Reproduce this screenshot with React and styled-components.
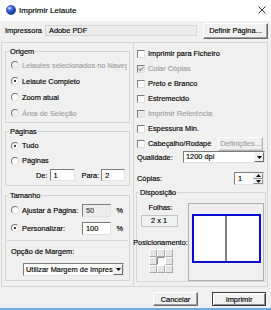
import React from 'react'
import styled, { createGlobalStyle, css } from 'styled-components'

const GlobalStyle = createGlobalStyle`
  html, body {
    margin: 0;
    padding: 0;
    background: #f0f0f0;
  }
  body {
    font-family: "Liberation Sans", Arial, sans-serif;
    font-size: 7.4px;
    color: #000;
    -webkit-text-stroke: 0.15px;
  }
`

const Window = styled.div`
  width: 271px;
  height: 310px;
  box-sizing: border-box;
  background: #f0f0f0;
  border-bottom: 2px solid #73a9dd;
  display: flex;
  flex-direction: column;
  overflow: hidden;
`

const TitleBar = styled.div`
  height: 21px;
  flex-shrink: 0;
  background: #fff;
  display: flex;
  align-items: center;
  padding: 0 5px 1px 6px;
  box-sizing: border-box;
`

const TitleText = styled.span`
  flex: 1;
  margin-left: 3px;
  font-size: 8px;
`

const PrinterRow = styled.div`
  height: 21px;
  flex-shrink: 0;
  display: flex;
  align-items: center;
  padding: 0 0 2px 5px;
  box-sizing: border-box;
`

const ReadField = styled.div`
  box-sizing: border-box;
  width: 152px;
  height: 11px;
  margin-left: 3px;
  padding-left: 3px;
  line-height: 9px;
  background: #ececec;
  border: 1px solid #d6d6d6;
`

const Button = styled.button`
  box-sizing: border-box;
  width: ${p => p.$w}px;
  height: ${p => p.$h || 14}px;
  margin: 0;
  padding: 0;
  font: inherit;
  color: ${p => (p.disabled ? '#a2a2a2' : '#000')};
  background: #f0f0f0;
  border: 1px solid;
  border-color: ${p => (p.disabled ? '#fff #b4b4b4 #b4b4b4 #fff' : '#fff #6a6a6a #6a6a6a #fff')};
  box-shadow: inset -1px -1px ${p => (p.disabled ? '#d8d8d8' : '#a0a0a0')};
  ${p => p.$default && css`
    border-color: #3c3c3c;
    box-shadow: inset 1px 1px #fff, inset -1px -1px #8c8c8c;
  `}
`

const Main = styled.div`
  height: 245px;
  flex-shrink: 0;
  box-sizing: border-box;
  margin: 0 3px 0 1px;
  border: 1px solid #d5d5d5;
  display: flex;
`

const LeftCol = styled.div`
  width: 132px;
  box-sizing: border-box;
  border-right: 1px solid #d5d5d5;
  padding: 4px 3px 0;
  display: flex;
  flex-direction: column;
`

const RightCol = styled.div`
  flex: 1;
  padding: 3px 0 0 3px;
  display: flex;
  flex-direction: column;
`

const Group = styled.fieldset`
  margin: ${p => p.$mt || 0}px 0 0;
  padding: ${p => p.$pad || '1px 5px 1px'};
  border: 1px solid #d5d5d5;
  min-width: 0;
`

const Legend = styled.legend`
  padding: 0 1px;
  margin-left: ${p => p.$offset ?? -2}px;
  line-height: 9px;
`

const OptionRow = styled.div`
  display: flex;
  align-items: center;
  height: ${p => p.$h || 16}px;
  white-space: nowrap;
  overflow: hidden;
  margin-right: -3px;
  color: ${p => (p.$disabled ? '#a2a2a2' : '#000')};
`

const RadioMark = styled.span`
  width: 8px;
  height: 8px;
  flex-shrink: 0;
  box-sizing: border-box;
  border-radius: 50%;
  border: 1px solid;
  border-color: #7c7c7c #e0e0e0 #e0e0e0 #7c7c7c;
  background: ${p => (p.$disabled ? '#f0f0f0' : '#fff')};
  margin-right: 3px;
  display: flex;
  align-items: center;
  justify-content: center;

  &::after {
    content: '';
    display: ${p => (p.$checked ? 'block' : 'none')};
    width: 2px;
    height: 2px;
    border-radius: 50%;
    background: #000;
  }
`

const CheckBox = styled.span`
  width: 8px;
  height: 8px;
  flex-shrink: 0;
  box-sizing: border-box;
  border: 1px solid;
  border-color: #7c7c7c #e0e0e0 #e0e0e0 #7c7c7c;
  background: ${p => (p.$disabled ? '#e8e8e8' : '#fff')};
  margin-right: 3px;
  display: flex;
  align-items: center;
  justify-content: center;
`

const TextBox = styled.input`
  box-sizing: border-box;
  width: ${p => p.$w}px;
  height: ${p => p.$h || 12}px;
  margin: 0 0 0 ${p => p.$ml || 0}px;
  padding: 0 0 0 3px;
  font: inherit;
  color: ${p => (p.$off ? '#3a3a3a' : '#000')};
  background: ${p => (p.$off ? '#ececec' : '#fff')};
  border: 1px solid;
  border-color: #7c7c7c #e3e3e3 #e3e3e3 #7c7c7c;
  outline: none;
`

const PageRange = styled.div`
  display: flex;
  align-items: center;
  height: 14px;
  padding-left: 25px;
`

const FieldLabel = styled.span`
  margin-left: ${p => p.$ml || 0}px;
  margin-right: ${p => p.$mr || 2}px;
`

const SizeRow = styled.div`
  display: flex;
  align-items: center;
  height: 18px;
  white-space: nowrap;
`

const Grow = styled.span`
  flex: 1;
`

const Percent = styled.span`
  width: 12px;
  text-align: right;
  margin-right: 1px;
`

const Separator = styled.div`
  height: 1px;
  background: #d5d5d5;
  margin: 3px -4px 0;
`

const MarginLabel = styled.div`
  height: 14px;
  line-height: 14px;
  margin-top: 4px;
`

const Select = styled.div`
  box-sizing: border-box;
  width: ${p => p.$w}px;
  height: ${p => p.$h || 12}px;
  margin-left: ${p => (p.$ml === 'auto' ? 'auto' : `${p.$ml || 0}px`)};
  margin-right: ${p => p.$mr || 0}px;
  margin-top: ${p => p.$mt || 0}px;
  border: 1px solid;
  border-color: #7c7c7c #e3e3e3 #e3e3e3 #7c7c7c;
  background: #fff;
  display: flex;
`

const SelectText = styled.span`
  flex: 1;
  overflow: hidden;
  white-space: nowrap;
  padding-left: 2px;
  line-height: ${p => p.$lh || 10}px;
`

const ArrowButton = styled.span`
  width: 10px;
  flex-shrink: 0;
  box-sizing: border-box;
  background: #f0f0f0;
  border: 1px solid;
  border-color: #f8f8f8 #6a6a6a #6a6a6a #f8f8f8;
  display: flex;
  align-items: center;
  justify-content: center;
`

const CheckRow = styled(OptionRow)`
  height: 15px;
  margin-right: 0;
  overflow: visible;
`

const PushRight = styled.div`
  margin-left: auto;
  margin-right: 4px;
`

const LabeledRow = styled.div`
  display: flex;
  align-items: center;
  height: ${p => p.$h}px;
  margin-top: ${p => p.$mt || 0}px;
`

const Spinner = styled.div`
  box-sizing: border-box;
  width: 30px;
  height: 13px;
  margin: 0 3px 0 auto;
  border: 1px solid;
  border-color: #7c7c7c #e3e3e3 #e3e3e3 #7c7c7c;
  background: #fff;
  display: flex;
`

const SpinValue = styled.span`
  flex: 1;
  padding-left: 3px;
  line-height: 11px;
`

const SpinButtons = styled.span`
  width: 10px;
  display: flex;
  flex-direction: column;
`

const SpinButton = styled.span`
  flex: 1;
  box-sizing: border-box;
  background: #f0f0f0;
  border: 1px solid;
  border-color: #f8f8f8 #8a8a8a #8a8a8a #f8f8f8;
  display: flex;
  align-items: center;
  justify-content: center;
`

const LayoutGroup = styled(Group)`
  width: 130px;
  box-sizing: border-box;
  margin-left: -1px;
`

const LayoutBody = styled.div`
  display: flex;
  height: 78px;
`

const SheetInfo = styled.div`
  width: 47px;
  display: flex;
  flex-direction: column;
  align-items: center;
  white-space: nowrap;
`

const InfoLabel = styled.div`
  line-height: 9px;
  margin-top: ${p => p.$mt || 0}px;
`

const SheetCount = styled.div`
  box-sizing: border-box;
  width: 37px;
  height: 12px;
  margin-top: 3px;
  margin-left: -3px;
  border: 1px solid #c4c4c4;
  text-align: center;
  line-height: 10px;
`

const AnchorGrid = styled.div`
  display: grid;
  grid-template-columns: repeat(3, 8px);
  grid-template-rows: repeat(3, 8px);
  margin-top: 2px;
`

const AnchorCell = styled.span`
  box-sizing: border-box;
  border: 1px solid;
  border-color: ${p => (p.$active ? '#8c8c8c #fff #fff #8c8c8c' : '#fff #a8a8a8 #a8a8a8 #fff')};
  background: ${p => (p.$active ? '#fafafa' : '#e4e4e4')};
`

const PreviewFrame = styled.div`
  box-sizing: border-box;
  width: 76px;
  margin-left: auto;
  margin-right: 1px;
  border: 1px solid #b0b0b0;
  padding-top: 10px;
  display: flex;
  justify-content: center;
  align-items: flex-start;
`

const Sheet = styled.div`
  box-sizing: border-box;
  width: 69px;
  height: 49px;
  border: 2px solid #0a0ad2;
  background: #fff;
  display: flex;
  justify-content: center;
`

const Fold = styled.span`
  width: 2px;
  background: #808080;
`

const Footer = styled.div`
  height: 21px;
  flex-shrink: 0;
  box-sizing: border-box;
  padding: 5px 5px 0 0;
  display: flex;
  justify-content: flex-end;
  gap: 14px;
`

const Triangle = ({ up }) => (
  <svg width="5" height="3" viewBox="0 0 5 3">
    <path d={up ? 'M0 3 L2.5 0 L5 3 Z' : 'M0 0 L5 0 L2.5 3 Z'} fill="#000" />
  </svg>
)

const Radio = ({ label, checked, disabled }) => (
  <OptionRow $disabled={disabled}>
    <RadioMark $checked={checked} $disabled={disabled} />
    {label}
  </OptionRow>
)

const Check = ({ checked, disabled }) => (
  <CheckBox $disabled={disabled}>
    {checked && (
      <svg width="6" height="6" viewBox="0 0 6 6">
        <path d="M0.6 2.8 L2.3 4.5 L5.4 1.1" fill="none" stroke={disabled ? '#9a9a9a' : '#000'} strokeWidth="1.3" />
      </svg>
    )}
  </CheckBox>
)

const origins = [
  { label: 'Leiautes selecionados no Navegador', disabled: true },
  { label: 'Leiaute Completo', checked: true },
  { label: 'Zoom atual' },
  { label: 'Área de Seleção', disabled: true },
]

const options = [
  { label: 'Imprimir para Ficheiro' },
  { label: 'Colar Cópias', checked: true, disabled: true },
  { label: 'Preto e Branco' },
  { label: 'Estremecido' },
  { label: 'Imprimir Referência', disabled: true },
  { label: 'Espessura Min.' },
]

export default function App() {
  return (
    <>
      <GlobalStyle />
      <Window>
        <TitleBar>
          <svg width="10" height="10" viewBox="0 0 10 10">
            <defs>
              <radialGradient id="globe" cx="0.35" cy="0.3" r="0.75">
                <stop offset="0" stopColor="#8fb6ff" />
                <stop offset="0.45" stopColor="#2f5fd6" />
                <stop offset="1" stopColor="#0d2a7a" />
              </radialGradient>
            </defs>
            <circle cx="5" cy="5" r="4.6" fill="url(#globe)" stroke="#1b3c96" strokeWidth="0.6" />
            <ellipse cx="3.6" cy="3.2" rx="1.6" ry="1" fill="#d9e6ff" opacity="0.7" />
          </svg>
          <TitleText>Imprimir Leiaute</TitleText>
          <svg width="8" height="8" viewBox="0 0 8 8">
            <path d="M0.5 0.5 L7.5 7.5 M7.5 0.5 L0.5 7.5" stroke="#222" strokeWidth="0.9" />
          </svg>
        </TitleBar>

        <PrinterRow>
          <span>Impressora</span>
          <ReadField>Adobe PDF</ReadField>
          <Button $w={65} $h={16} style={{ marginLeft: 6 }}>Definir Página...</Button>
        </PrinterRow>

        <Main>
          <LeftCol>
            <Group>
              <Legend>Origem</Legend>
              {origins.map(o => (
                <Radio key={o.label} {...o} />
              ))}
            </Group>

            <Group $mt={4} $pad="2px 5px 3px">
              <Legend>Páginas</Legend>
              <OptionRow $h={15}>
                <RadioMark $checked />
                Tudo
              </OptionRow>
              <OptionRow $h={15}>
                <RadioMark />
                Páginas
              </OptionRow>
              <PageRange>
                <FieldLabel>De:</FieldLabel>
                <TextBox $w={25} readOnly value="1" />
                <FieldLabel $ml={7}>Para:</FieldLabel>
                <TextBox $w={24} readOnly value="2" />
              </PageRange>
            </Group>

            <Group $mt={5} $pad="1px 5px 4px">
              <Legend>Tamanho</Legend>
              <SizeRow>
                <RadioMark />
                Ajustar à Página:
                <Grow />
                <TextBox $w={29} $h={13} $off readOnly value="50" />
                <Percent>%</Percent>
              </SizeRow>
              <SizeRow>
                <RadioMark $checked />
                Personalizar:
                <Grow />
                <TextBox $w={29} $h={13} readOnly value="100" />
                <Percent>%</Percent>
              </SizeRow>
              <Separator />
              <MarginLabel>Opção de Margem:</MarginLabel>
              <Select $w={101} $h={13} $ml={12} $mt={4}>
                <SelectText $lh={11}>Utilizar Margem de Impressão</SelectText>
                <ArrowButton>
                  <Triangle />
                </ArrowButton>
              </Select>
            </Group>
          </LeftCol>

          <RightCol>
            {options.map(o => (
              <CheckRow key={o.label} $disabled={o.disabled}>
                <Check checked={o.checked} disabled={o.disabled} />
                {o.label}
              </CheckRow>
            ))}
            <CheckRow>
              <Check />
              Cabeçalho/Rodapé
              <PushRight>
                <Button $w={45} disabled>Definições...</Button>
              </PushRight>
            </CheckRow>

            <LabeledRow $h={12}>
              Qualidade:
              <Select $w={82} $ml="auto" $mr={2}>
                <SelectText>1200 dpi</SelectText>
                <ArrowButton>
                  <Triangle />
                </ArrowButton>
              </Select>
            </LabeledRow>

            <LabeledRow $h={13} $mt={9}>
              Cópias:
              <Spinner>
                <SpinValue>1</SpinValue>
                <SpinButtons>
                  <SpinButton><Triangle up /></SpinButton>
                  <SpinButton><Triangle /></SpinButton>
                </SpinButtons>
              </Spinner>
            </LabeledRow>

            <LayoutGroup $mt={3} $pad="6px 0 0 0">
              <Legend $offset={2}>Disposição</Legend>
              <LayoutBody>
                <SheetInfo>
                  <InfoLabel>Folhas:</InfoLabel>
                  <SheetCount>2 x 1</SheetCount>
                  <InfoLabel $mt={11}>Posicionamento:</InfoLabel>
                  <AnchorGrid>
                    {Array.from({ length: 9 }, (_, i) => (
                      <AnchorCell key={i} $active={i === 4} />
                    ))}
                  </AnchorGrid>
                </SheetInfo>
                <PreviewFrame>
                  <Sheet>
                    <Fold />
                  </Sheet>
                </PreviewFrame>
              </LayoutBody>
            </LayoutGroup>
          </RightCol>
        </Main>

        <Footer>
          <Button $w={45}>Cancelar</Button>
          <Button $w={54} $default>Imprimir</Button>
        </Footer>
      </Window>
    </>
  )
}
